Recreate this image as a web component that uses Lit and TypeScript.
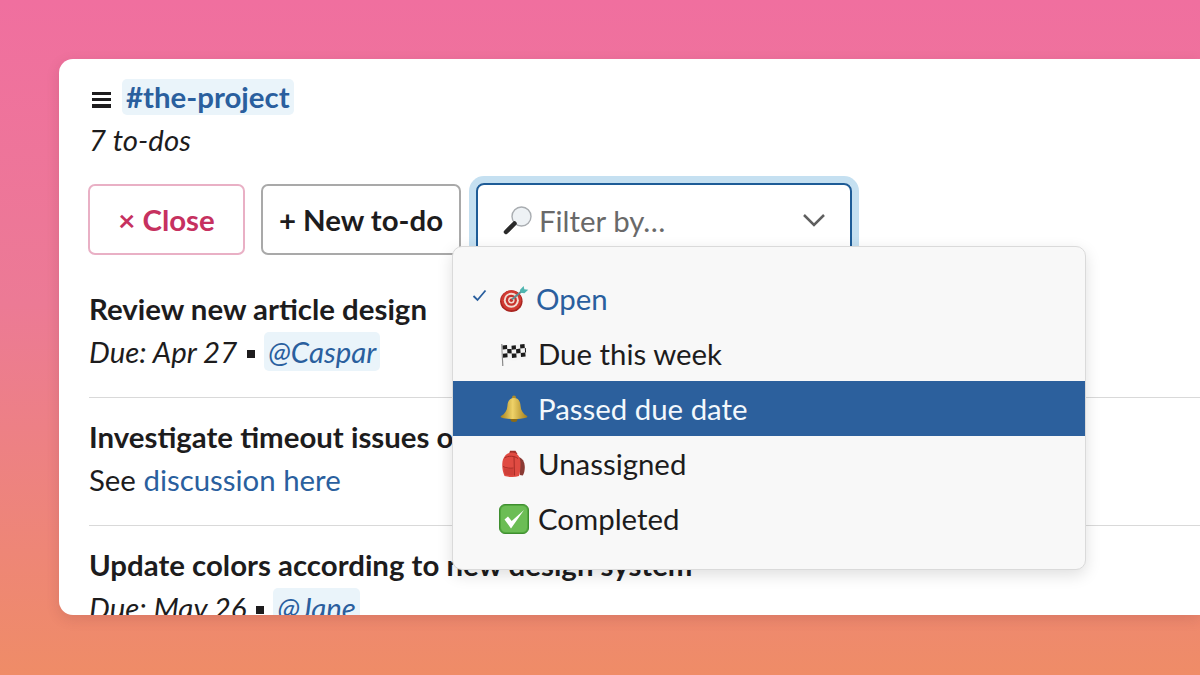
import { LitElement, css, html, svg } from 'lit';
import { customElement } from 'lit/decorators.js';

const target = svg`
  <ellipse cx="11.5" cy="15" rx="10.5" ry="10.2" fill="#a82520"/>
  <circle cx="11.5" cy="14.2" r="9.4" fill="#d13a32"/>
  <circle cx="11.5" cy="14.2" r="7" fill="#f1ddd3"/>
  <circle cx="11.5" cy="14.2" r="5.2" fill="#c9322c"/>
  <circle cx="11.5" cy="14.2" r="3" fill="#f1ddd3"/>
  <circle cx="11.5" cy="14.2" r="1.6" fill="#c9322c"/>
  <path d="M12 13.5 22 5" stroke="#5f8f92" stroke-width="1.8"/>
  <path d="M19.5 4.5 23 .8l.6 3 3.7.6-3.6 3.3-3.3-.6z" fill="#4fb5b0"/>`;

const flag = svg`
  <path d="M1.8 3 2.8 25" stroke="#8a8a8a" stroke-width="1.2"/>
  <path d="M2.5 4.5c4-1.6 7 .6 11 0 4-.6 7-2 11.5-1.4L26.5 18c-4-.5-7 .9-11 1.4s-8.500-1.500-12.500 0z" fill="#f4f4f4"/>
  <g fill="#1c1c1c">
    <path d="M2.5 4.5 7 4l.2 4-4.500.6zM11.500 4.700l4.300-.4.200 4-4.300.4zM20 3.600l4.500-.5.300 4-4.500.5z"/>
    <path d="M7.200 8l4.300.1.200 4.300-4.300-.2zM16 8.300l4.300-.7.300 4.300-4.300.7zM24.800 7.100l1 0 .3 4.300-1 .1z"/>
    <path d="M2.900 12.800l4.500-.5.200 4-4.500.5zM11.700 12.500l4.600-.1.300 4-4.600.5zM20.700 11.900l4.600-.5.300 4-4.600.6z"/>
  </g>`;

const bell = svg`
  <defs>
    <linearGradient id="bellFill" x1="0" x2="1" y1="0" y2="0">
      <stop offset="0" stop-color="#a8841f"/>
      <stop offset=".45" stop-color="#efd268"/>
      <stop offset="1" stop-color="#a47f1c"/>
    </linearGradient>
  </defs>
  <circle cx="14" cy="2.4" r="2" fill="#b08c28"/>
  <ellipse cx="14" cy="24.5" rx="3.4" ry="2.5" fill="#8c6a14"/>
  <path d="M14 3c-4.500 0-6.300 3.400-6.600 8-.3 4.500-2.400 7.800-6.400 10-.8.500-.3 1.500 1 1.800 3 .9 8 1.300 12 1.300s9-.4 12-1.300c1.300-.3 1.800-1.300 1-1.800-4-2.200-6.100-5.500-6.400-10-.3-4.600-2.100-8-6.600-8z" fill="url(#bellFill)"/>`;

const backpack = svg`
  <path d="M17.500 7c4 1 6 4.500 6.300 10 .1 3-.7 6.500-2 8.500l-3-.5z" fill="#8a3a34"/>
  <path d="M9 .8h5.500l2 3.200H8z" fill="#a3322b"/>
  <path d="M11 2.500c5.500 0 8.500 4.300 8.500 11 0 5-.5 9-1.500 12.500-5 1.400-10 1.300-14.500 0C1.800 22 1 18 1.300 13.500c.4-6.500 4.200-11 9.700-11z" fill="#e04b42"/>
  <path d="M3.500 8c3.500-2.500 10-2.300 13.500.5M2 16.500c3.500 1.700 7 2 10.500 1.500M13 6.500l.5 19" stroke="#a82c26" stroke-width="1" fill="none"/>
  <path d="M3 18c3 1.100 6.500 1.300 9.500.9l.4 6.300c-3.400.4-6.800.2-9.300-.6z" fill="#cf3f38"/>`;

const check = svg`
  <rect x=".5" y=".5" width="29" height="29" rx="5.5" fill="#52a83e" stroke="#3f8e30"/>
  <rect x="2" y="2" width="26" height="26" rx="4.5" fill="#6cbd55"/>
  <path d="M5.500 15.500 12 24.500 25 6 12.700 17 9 12.500z" fill="#fff"/>`;

const options = [
  { label: 'Open', icon: target, box: '0 0 28 26', w: 30, h: 28, selected: true, active: false },
  { label: 'Due this week', icon: flag, box: '0 0 28 26', w: 28, h: 26, selected: false, active: false },
  { label: 'Passed due date', icon: bell, box: '0 0 28 27', w: 28, h: 27, selected: false, active: true },
  { label: 'Unassigned', icon: backpack, box: '0 0 25 27', w: 25, h: 27, selected: false, active: false },
  { label: 'Completed', icon: check, box: '0 0 30 30', w: 30, h: 30, selected: false, active: false },
];

@customElement('app-root')
export class AppRoot extends LitElement {
  static styles = css`
    :host {
      display: block;
      width: 1200px;
      height: 675px;
      padding: 59px 0 0 59px;
      box-sizing: border-box;
      overflow: hidden;
      background: linear-gradient(180deg, #f06f9f 0%, #ec7a95 45%, #ef8c67 100%);
      font-family: Lato, 'Noto Sans', sans-serif;
      font-size: 29.4px;
      color: #1d1c1d;
    }

    .card {
      position: relative;
      height: 556px;
      padding: 20px 0 0 30px;
      box-sizing: border-box;
      overflow: hidden;
      background: #fff;
      border-radius: 14px 0 0 14px;
      box-shadow: 0 4px 14px rgba(90, 30, 40, 0.14);
    }

    .heading {
      display: flex;
      align-items: center;
      gap: 11px;
      height: 36px;
      margin-left: 3px;
    }

    .menu-icon {
      display: flex;
      flex-direction: column;
      justify-content: space-between;
      width: 19px;
      height: 16px;
      margin-top: 5px;
    }

    .menu-icon i {
      display: block;
      height: 3.5px;
      background: #1d1c1d;
    }

    .channel {
      padding: 0 4px;
      line-height: 36px;
      border-radius: 5px;
      background: #eaf4fa;
      color: #2a5f9e;
      font-weight: 700;
    }

    .count {
      line-height: 40px;
      margin-top: 5px;
      font-style: italic;
    }

    .actions {
      display: flex;
      gap: 16px;
      margin-top: 24px;
      margin-left: -1px;
    }

    .btn {
      display: flex;
      align-items: center;
      justify-content: center;
      height: 71px;
      box-sizing: border-box;
      border-radius: 7px;
      background: #fff;
      font-weight: 700;
    }

    .close {
      width: 157px;
      border: 2px solid #e9b0c5;
      color: #c6315f;
    }

    .new {
      width: 200px;
      border: 2px solid #a9a9a9;
    }

    .select {
      display: flex;
      align-items: center;
      width: 376px;
      height: 80px;
      margin-left: -1px;
      margin-top: -1px;
      padding: 0 24px 6px 25px;
      box-sizing: border-box;
      border: 2px solid #1e5c97;
      border-radius: 8px;
      box-shadow: 0 0 0 7px #c5e0f1;
      color: #696969;
    }

    .select span {
      flex: 1;
      margin-left: 7px;
    }

    .glass {
      width: 29px;
      height: 29px;
    }

    .chevron {
      width: 24px;
      height: 14px;
    }

    .list {
      margin-top: 7px;
    }

    .todo {
      padding: 19px 0 22px;
      border-bottom: 1px solid #d9d9d9;
    }

    .todo:last-child {
      border-bottom: none;
    }

    .title {
      line-height: 40px;
      font-weight: 700;
    }

    .meta {
      line-height: 46px;
    }

    .due {
      font-style: italic;
    }

    .dot {
      display: inline-block;
      width: 8px;
      height: 8px;
      margin: 0 9px 5px 10px;
      background: #1d1c1d;
    }

    .mention {
      padding: 2px 4px;
      border-radius: 5px;
      background: #eaf4fa;
      color: #2a5f9e;
      font-style: italic;
    }

    .link {
      color: #2a5f9e;
    }

    .dropdown {
      position: absolute;
      left: 393px;
      top: 187px;
      width: 634px;
      height: 324px;
      padding-top: 24px;
      box-sizing: border-box;
      border: 1px solid #dadada;
      border-radius: 10px;
      background: #f8f8f8;
      box-shadow: 0 5px 16px rgba(0, 0, 0, 0.13);
    }

    .option {
      position: relative;
      display: flex;
      align-items: center;
      height: 55px;
      padding-left: 45px;
    }

    .slot {
      display: flex;
      align-items: center;
      justify-content: center;
      width: 31px;
      margin-right: 9px;
    }

    .selected {
      color: #2a5f9e;
    }

    .selected .slot {
      margin-right: 7px;
    }

    .tick {
      position: absolute;
      left: 19px;
      top: 18px;
      width: 15px;
      height: 13px;
    }

    .active {
      background: #2c609d;
      color: #f3f8fc;
    }
  `;

  render() {
    return html`
      <div class="card">
        <div class="heading">
          <div class="menu-icon"><i></i><i></i><i></i></div>
          <div class="channel">#the-project</div>
        </div>
        <div class="count">7 to-dos</div>
        <div class="actions">
          <div class="btn close">× Close</div>
          <div class="btn new">+ New to-do</div>
          <div class="select">
            <svg class="glass" viewBox="0 0 29 29">
              <circle cx="18.5" cy="10.5" r="9.5" fill="#eef2f5" stroke="#a9adb1" stroke-width="1.4"/>
              <path d="M11.5 17.500 3 26" stroke="#2a2a2a" stroke-width="4.5" stroke-linecap="round"/>
            </svg>
            <span>Filter by…</span>
            <svg class="chevron" viewBox="0 0 24 14">
              <path d="M2 2 12 12 22 2" fill="none" stroke="#5f5f5f" stroke-width="2.5"/>
            </svg>
          </div>
        </div>
        <div class="list">
          <div class="todo">
            <div class="title">Review new article design</div>
            <div class="meta">
              <span class="due">Due: Apr 27</span><i class="dot"></i><span class="mention">@Caspar</span>
            </div>
          </div>
          <div class="todo">
            <div class="title">Investigate timeout issues on the new server</div>
            <div class="meta">See <span class="link">discussion here</span></div>
          </div>
          <div class="todo">
            <div class="title">Update colors according to new design system</div>
            <div class="meta">
              <span class="due">Due: May 26</span><i class="dot"></i><span class="mention">@Jane</span>
            </div>
          </div>
        </div>
        <div class="dropdown">
          ${options.map(
            (o) => html`
              <div class="option ${o.selected ? 'selected' : ''} ${o.active ? 'active' : ''}">
                ${o.selected
                  ? html`<svg class="tick" viewBox="0 0 15 13"><path d="M1.5 7 5.5 11 13.5 1.5" fill="none" stroke="#2a5f9e" stroke-width="1.8"/></svg>`
                  : ''}
                <div class="slot">
                  <svg width=${o.w} height=${o.h} viewBox=${o.box}>${o.icon}</svg>
                </div>
                ${o.label}
              </div>
            `,
          )}
        </div>
      </div>
    `;
  }
}
